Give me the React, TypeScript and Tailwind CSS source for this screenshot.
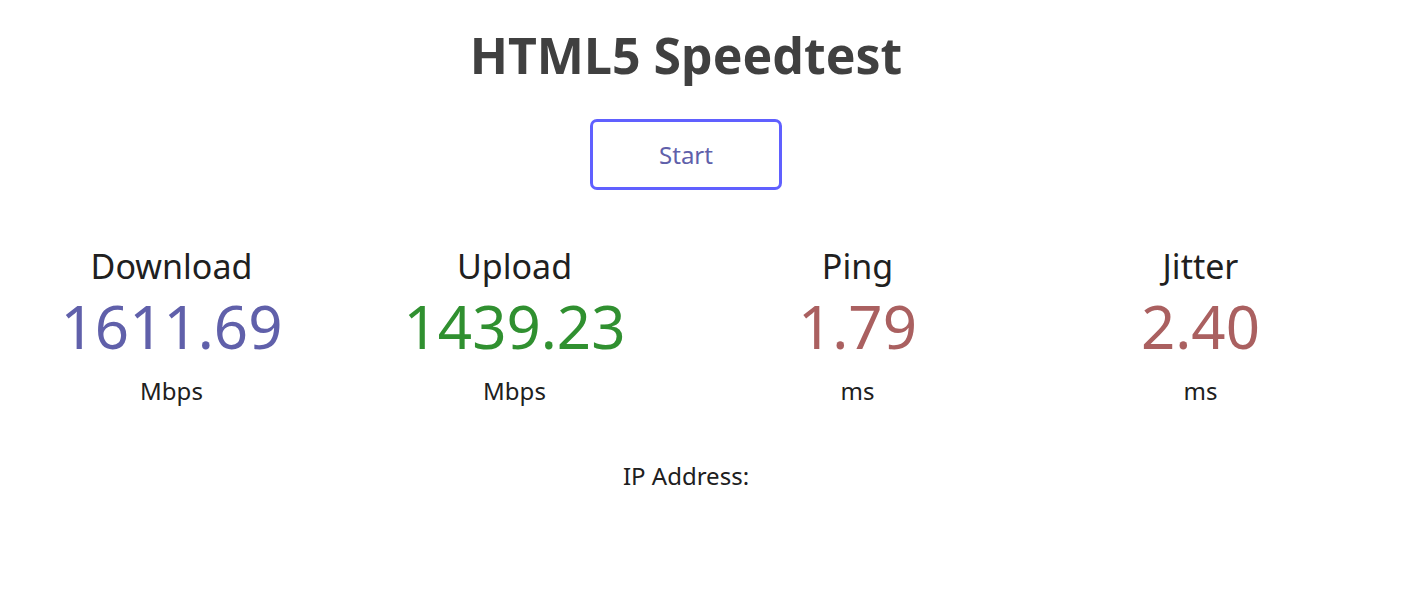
const tests = [
  { name: 'Download', value: '1611.69', unit: 'Mbps', color: 'text-[#6060AA]' },
  { name: 'Upload', value: '1439.23', unit: 'Mbps', color: 'text-[#309030]' },
  { name: 'Ping', value: '1.79', unit: 'ms', color: 'text-[#AA6060]' },
  { name: 'Jitter', value: '2.40', unit: 'ms', color: 'text-[#AA6060]' },
];

export default function App() {
  return (
    <div
      className="w-[1372px] min-h-[590px] bg-white text-[#202020] text-center text-[24px]"
      style={{ fontFamily: '"Noto Sans", "Open Sans", sans-serif' }}
    >
      <h1 className="pt-[27px] h-[84px] text-[50px] leading-[56px] font-bold text-[#404040]">
        HTML5 Speedtest
      </h1>

      <div className="mt-[35px] flex justify-center">
        <button className="w-[192px] h-[71px] flex items-center justify-center border-[3px] border-[#6060FF] rounded-[7px] bg-transparent text-[#6060AA] text-[24px] leading-[32px] cursor-pointer">
          Start
        </button>
      </div>

      {/* results */}
      <div className="mt-[48px] flex justify-center gap-[7px]">
        {tests.map(t => (
          <div key={t.name} className="w-[336px] flex flex-col">
            <div className="pt-[4px] text-[34px] leading-[48px]">{t.name}</div>
            <div className={`mt-[1px] text-[60px] leading-[70px] ${t.color}`}>{t.value}</div>
            <div className="mt-[14px] text-[24px] leading-[32px]">{t.unit}</div>
          </div>
        ))}
      </div>

      <div className="mt-[53px] text-[24px] leading-[32px]">
        IP Address: <span></span>
      </div>
    </div>
  );
}
